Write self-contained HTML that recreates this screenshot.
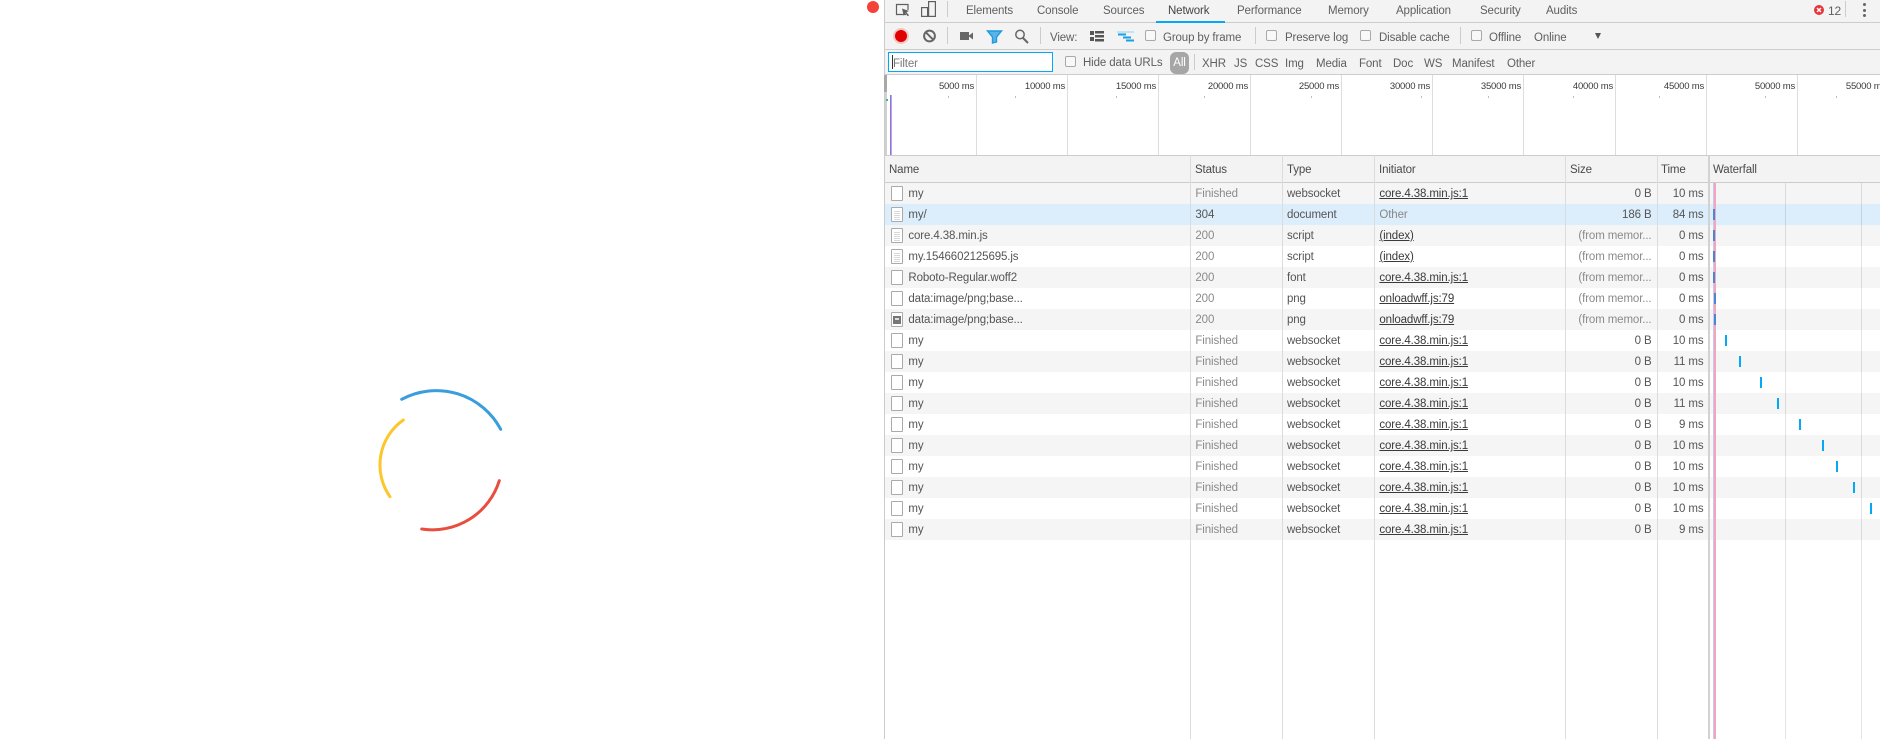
<!DOCTYPE html>
<html><head><meta charset="utf-8"><style>
html,body{margin:0;padding:0;background:#fff;width:1880px;height:739px;overflow:hidden}
body{position:relative;font-family:"Liberation Sans",sans-serif;font-size:11.5px;letter-spacing:-.12px;color:#444}
.a{position:absolute;white-space:nowrap}
.bar{position:absolute;left:885px;width:995px;background:#f3f3f3}
.l{position:absolute;background:#ccc}
.t{position:absolute;white-space:nowrap;color:#5f5f5f;line-height:16px}
.sep{position:absolute;width:1px;background:#ccc}
.cb{position:absolute;width:9px;height:9px;border:1px solid #a9a9a9;border-radius:2px;background:#f8f8f8}
.o{position:absolute;top:81px;white-space:nowrap;text-align:right;font-size:9.5px;letter-spacing:-.2px;color:#3a3a3a;line-height:12px;width:60px}
.g{position:absolute;top:75px;height:80px;width:1px;background:#ddd}
.d{position:absolute;top:96px;width:1px;height:2px;background:#bbb}
.r{position:absolute;left:885px;width:995px;height:21px;line-height:23px;background:#fff;color:#555}
.r.s{background:#f5f5f5}.r.x{background:#dcedfc}
.r span{position:absolute;white-space:nowrap}
.n{left:23.4px}.st{left:310.4px;color:#8a8a8a}.ty{left:402px}
.i{left:494.4px;text-decoration:underline;color:#3a3a3a}
.sz{right:228.5px}.tm{right:176.5px}
.f{color:#8a8a8a}.x .st{color:#555}
.ic{position:absolute;left:6px;top:3px;width:10px;height:13px;border:1px solid #aaa;background:#fff;border-radius:1px}
.ic.dc{background:repeating-linear-gradient(#fff 0 1px,#d8d8d8 1px 2px) 2px 2px/6px 10px no-repeat #fff}
.c{position:absolute;top:155px;bottom:0;width:1px;background:#dcdcdc}
.h{position:absolute;top:162px;color:#4a4a4a;line-height:16px}
.w{position:absolute;width:2px;height:11px;background:#03a9f4}
.w.b{background:#4c86d0}
</style></head><body>
<div class="a" style="left:867px;top:1px;width:12px;height:12px;border-radius:50%;background:#f44336"></div>

<svg class="a" style="left:360px;top:370px" width="160" height="170" fill="none" stroke-width="3" stroke-linecap="round">
<path d="M41.700 29.300A73 73 0 0 1 140.700 59.300" stroke="#3a9ddc"/>
<path d="M139.300 110.700A70 70 0 0 1 61.700 159" stroke="#e84d3d"/>
<path d="M43.300 50A55 55 0 0 0 30 126.700" stroke="#fcc72c"/>
</svg>

<div class="a" style="left:884px;top:0;width:1px;height:739px;background:#ccc"></div>

<div class="bar" style="top:0;height:22px;border-bottom:1px solid #ccc"></div>
<div class="bar" style="top:23px;height:26px;border-bottom:1px solid #ccc"></div>
<div class="bar" style="top:50px;height:24px;border-bottom:1px solid #ccc"></div>

<svg class="a" style="left:885px;top:0" width="70" height="22" fill="none" stroke="#5f5f5f" stroke-width="1.2">
<path d="M21 14.500H11.500V4.500H23V10"/><path d="M17 8.500l7 2.500-2.600 1.200 2.600 3-1.200 1-2.500-3-1.600 2.400z" fill="#5f5f5f" stroke="none"/>
<rect x="43.600" y="1.600" width="6.800" height="14.800"/><rect x="36.600" y="7.600" width="6" height="8.800"/>
</svg>
<div class="sep" style="left:947px;top:1px;height:16px"></div>
<span class="t" style="left:966px;top:3px">Elements</span>
<span class="t" style="left:1037px;top:3px">Console</span>
<span class="t" style="left:1103px;top:3px">Sources</span>
<span class="t" style="left:1168px;top:3px;color:#444">Network</span>
<div class="a" style="left:1156px;top:21px;width:69px;height:2px;background:#03a9f4"></div>
<span class="t" style="left:1237px;top:3px">Performance</span>
<span class="t" style="left:1328px;top:3px">Memory</span>
<span class="t" style="left:1396px;top:3px">Application</span>
<span class="t" style="left:1480px;top:3px">Security</span>
<span class="t" style="left:1546px;top:3px">Audits</span>
<svg class="a" style="left:1813px;top:4px" width="12" height="12"><circle cx="6" cy="6" r="5" fill="#e5343a"/><path d="M4 4l4 4M8 4l-4 4" stroke="#fff" stroke-width="1.400"/></svg>
<span class="t" style="left:1828px;top:3px;font-size:12px">12</span>
<div class="sep" style="left:1845px;top:1px;height:16px"></div>
<div class="a" style="left:1862.500px;top:3px;width:3px;height:3px;border-radius:50%;background:#666"></div>
<div class="a" style="left:1862.500px;top:8.500px;width:3px;height:3px;border-radius:50%;background:#666"></div>
<div class="a" style="left:1862.500px;top:13.500px;width:3px;height:3px;border-radius:50%;background:#666"></div>

<svg class="a" style="left:885px;top:24px" width="260" height="26" fill="none">
<circle cx="16" cy="12" r="8" fill="#f5c6c6"/><circle cx="16" cy="12" r="6" fill="#e00000"/>
<circle cx="44.500" cy="12" r="5.400" stroke="#666" stroke-width="2"/><path d="M40.700 8.200l7.600 7.600" stroke="#666" stroke-width="2"/>
<path d="M75 8h9v8h-9zM84 11.500l4-3v7l-4-3z" fill="#666"/>
<path d="M102.500 7h14l-5 6v5l-4 1v-6z" fill="#5bb4e8" stroke="#1e9ae0" stroke-width="1.400"/>
<circle cx="135" cy="10.500" r="4.200" stroke="#666" stroke-width="1.500"/><path d="M138 14l5 5" stroke="#666" stroke-width="2"/>
<path d="M205 7h4v4h-4zM205 13h4v4h-4zM210 7h9v2.500h-9zM210 11h9v2.500h-9zM210 15h9v2.500h-9z" fill="#555"/>
<path d="M232 7h17v2h-17z" fill="#bfe3f8"/><path d="M233 9.500h8v2h-8zM238 12.500h8v2h-8zM241 15.500h8v2h-8z" fill="#17a0e6"/>
</svg>
<div class="sep" style="left:947px;top:27px;height:17px"></div>
<div class="sep" style="left:1040px;top:27px;height:17px"></div>
<span class="t" style="left:1050px;top:30px">View:</span>
<div class="cb" style="left:1145px;top:30px"></div>
<span class="t" style="left:1163px;top:30px">Group by frame</span>
<div class="sep" style="left:1255px;top:27px;height:17px"></div>
<div class="cb" style="left:1266px;top:30px"></div>
<span class="t" style="left:1285px;top:30px">Preserve log</span>
<div class="cb" style="left:1360px;top:30px"></div>
<span class="t" style="left:1379px;top:30px">Disable cache</span>
<div class="sep" style="left:1460px;top:27px;height:17px"></div>
<div class="cb" style="left:1471px;top:30px"></div>
<span class="t" style="left:1489px;top:30px">Offline</span>
<span class="t" style="left:1534px;top:30px">Online</span>
<div class="a" style="left:1595px;top:33px;width:0;height:0;border-left:3.500px solid transparent;border-right:3.500px solid transparent;border-top:6px solid #555"></div>

<div class="a" style="left:888px;top:52px;width:163px;height:18px;border:1px solid #03a9f4;background:#fff"></div>
<div class="a" style="left:892px;top:55px;width:1px;height:14px;background:#333"></div>
<span class="t" style="left:893px;top:56px;color:#777">Filter</span>
<div class="cb" style="left:1065px;top:56px"></div>
<span class="t" style="left:1083px;top:55px">Hide data URLs</span>
<div class="a" style="left:1170px;top:52px;width:19px;height:22px;background:#a6a6a6;border-radius:6px;color:#fff;text-align:center;line-height:22px">All</div>
<div class="sep" style="left:1194px;top:54px;height:16px"></div>
<span class="t" style="left:1202px;top:56px">XHR</span>
<span class="t" style="left:1234px;top:56px">JS</span>
<span class="t" style="left:1255px;top:56px">CSS</span>
<span class="t" style="left:1285px;top:56px">Img</span>
<span class="t" style="left:1316px;top:56px">Media</span>
<span class="t" style="left:1359px;top:56px">Font</span>
<span class="t" style="left:1393px;top:56px">Doc</span>
<span class="t" style="left:1424px;top:56px">WS</span>
<span class="t" style="left:1452px;top:56px">Manifest</span>
<span class="t" style="left:1507px;top:56px">Other</span>

<div class="g" style="left:976px"></div><div class="g" style="left:1067px"></div><div class="g" style="left:1158px"></div><div class="g" style="left:1250px"></div><div class="g" style="left:1341px"></div><div class="g" style="left:1432px"></div><div class="g" style="left:1523px"></div><div class="g" style="left:1615px"></div><div class="g" style="left:1706px"></div><div class="g" style="left:1797px"></div>
<span class="o" style="left:914px">5000 ms</span><span class="o" style="left:1005px">10000 ms</span><span class="o" style="left:1096px">15000 ms</span><span class="o" style="left:1188px">20000 ms</span><span class="o" style="left:1279px">25000 ms</span><span class="o" style="left:1370px">30000 ms</span><span class="o" style="left:1461px">35000 ms</span><span class="o" style="left:1553px">40000 ms</span><span class="o" style="left:1644px">45000 ms</span><span class="o" style="left:1735px">50000 ms</span><span class="o" style="left:1826px">55000 ms</span>
<div class="d" style="left:948px"></div><div class="d" style="left:1015px"></div><div class="d" style="left:1116px"></div><div class="d" style="left:1204px"></div><div class="d" style="left:1311px"></div><div class="d" style="left:1421px"></div><div class="d" style="left:1488px"></div><div class="d" style="left:1573px"></div><div class="d" style="left:1659px"></div><div class="d" style="left:1765px"></div><div class="d" style="left:1836px"></div>
<div class="a" style="left:884px;top:75px;width:3px;height:17px;background:#a8a8a8"></div>
<div class="a" style="left:885px;top:92px;width:2px;height:63px;background:#d0d0d0"></div>
<div class="a" style="left:886px;top:99px;width:2px;height:2px;background:#1fbfae"></div>
<div class="a" style="left:890px;top:95px;width:1px;height:60px;background:#6f7ff5"></div>
<div class="a" style="left:891px;top:95px;width:1px;height:60px;background:#d79ac8"></div>

<div class="bar" style="top:155px;border-top:1px solid #ccc;border-bottom:1px solid #ccc;box-sizing:content-box;height:26px"></div>

<div class="r s" style="top:183px"><i class="ic"></i><span class="n">my</span><span class="st">Finished</span><span class="ty">websocket</span><span class="i">core.4.38.min.js:1</span><span class="sz">0 B</span><span class="tm">10 ms</span></div>
<div class="r x" style="top:204px"><i class="ic dc"></i><span class="n">my/</span><span class="st">304</span><span class="ty">document</span><span class="i" style="text-decoration:none;color:#888">Other</span><span class="sz">186 B</span><span class="tm">84 ms</span></div>
<div class="r s" style="top:225px"><i class="ic dc"></i><span class="n">core.4.38.min.js</span><span class="st">200</span><span class="ty">script</span><span class="i">(index)</span><span class="sz f">(from memor...</span><span class="tm">0 ms</span></div>
<div class="r" style="top:246px"><i class="ic dc"></i><span class="n">my.1546602125695.js</span><span class="st">200</span><span class="ty">script</span><span class="i">(index)</span><span class="sz f">(from memor...</span><span class="tm">0 ms</span></div>
<div class="r s" style="top:267px"><i class="ic"></i><span class="n">Roboto-Regular.woff2</span><span class="st">200</span><span class="ty">font</span><span class="i">core.4.38.min.js:1</span><span class="sz f">(from memor...</span><span class="tm">0 ms</span></div>
<div class="r" style="top:288px"><i class="ic"></i><span class="n">data:image/png;base...</span><span class="st">200</span><span class="ty">png</span><span class="i">onloadwff.js:79</span><span class="sz f">(from memor...</span><span class="tm">0 ms</span></div>
<div class="r s" style="top:309px"><i class="ic"><b class="a" style="left:1px;top:3px;width:8px;height:8px;background:#777"></b><b class="a" style="left:3px;top:5px;width:4px;height:2px;background:#ddd"></b></i><span class="n">data:image/png;base...</span><span class="st">200</span><span class="ty">png</span><span class="i">onloadwff.js:79</span><span class="sz f">(from memor...</span><span class="tm">0 ms</span></div>
<div class="r" style="top:330px"><i class="ic"></i><span class="n">my</span><span class="st">Finished</span><span class="ty">websocket</span><span class="i">core.4.38.min.js:1</span><span class="sz">0 B</span><span class="tm">10 ms</span></div>
<div class="r s" style="top:351px"><i class="ic"></i><span class="n">my</span><span class="st">Finished</span><span class="ty">websocket</span><span class="i">core.4.38.min.js:1</span><span class="sz">0 B</span><span class="tm">11 ms</span></div>
<div class="r" style="top:372px"><i class="ic"></i><span class="n">my</span><span class="st">Finished</span><span class="ty">websocket</span><span class="i">core.4.38.min.js:1</span><span class="sz">0 B</span><span class="tm">10 ms</span></div>
<div class="r s" style="top:393px"><i class="ic"></i><span class="n">my</span><span class="st">Finished</span><span class="ty">websocket</span><span class="i">core.4.38.min.js:1</span><span class="sz">0 B</span><span class="tm">11 ms</span></div>
<div class="r" style="top:414px"><i class="ic"></i><span class="n">my</span><span class="st">Finished</span><span class="ty">websocket</span><span class="i">core.4.38.min.js:1</span><span class="sz">0 B</span><span class="tm">9 ms</span></div>
<div class="r s" style="top:435px"><i class="ic"></i><span class="n">my</span><span class="st">Finished</span><span class="ty">websocket</span><span class="i">core.4.38.min.js:1</span><span class="sz">0 B</span><span class="tm">10 ms</span></div>
<div class="r" style="top:456px"><i class="ic"></i><span class="n">my</span><span class="st">Finished</span><span class="ty">websocket</span><span class="i">core.4.38.min.js:1</span><span class="sz">0 B</span><span class="tm">10 ms</span></div>
<div class="r s" style="top:477px"><i class="ic"></i><span class="n">my</span><span class="st">Finished</span><span class="ty">websocket</span><span class="i">core.4.38.min.js:1</span><span class="sz">0 B</span><span class="tm">10 ms</span></div>
<div class="r" style="top:498px"><i class="ic"></i><span class="n">my</span><span class="st">Finished</span><span class="ty">websocket</span><span class="i">core.4.38.min.js:1</span><span class="sz">0 B</span><span class="tm">10 ms</span></div>
<div class="r s" style="top:519px"><i class="ic"></i><span class="n">my</span><span class="st">Finished</span><span class="ty">websocket</span><span class="i">core.4.38.min.js:1</span><span class="sz">0 B</span><span class="tm">9 ms</span></div>

<div class="c" style="left:1190px"></div><div class="c" style="left:1282px"></div><div class="c" style="left:1374px"></div><div class="c" style="left:1565px"></div><div class="c" style="left:1657px"></div>
<div class="c" style="left:1708px;width:2px;background:#d2d2d2"></div>
<div class="a" style="left:1785px;top:183px;bottom:0;width:1px;background:rgba(0,0,0,.11)"></div>
<div class="a" style="left:1861px;top:183px;bottom:0;width:1px;background:rgba(0,0,0,.11)"></div>
<span class="h" style="left:889px">Name</span><span class="h" style="left:1195px">Status</span><span class="h" style="left:1287px">Type</span><span class="h" style="left:1379px">Initiator</span><span class="h" style="left:1570px">Size</span><span class="h" style="left:1661px">Time</span><span class="h" style="left:1713px">Waterfall</span>

<div class="a" style="left:1713px;top:183px;bottom:0;width:1px;background:#c9c6f2"></div>
<div class="a" style="left:1714px;top:183px;bottom:0;width:2px;background:#f2a6bb"></div>

<div class="w b" style="left:1713px;top:209px"></div><div class="w b" style="left:1713px;top:230px"></div><div class="w b" style="left:1713px;top:251px"></div><div class="w b" style="left:1713px;top:272px"></div><div class="w b" style="left:1714px;top:293px"></div><div class="w b" style="left:1714px;top:314px"></div>
<div class="w" style="left:1725px;top:335px"></div><div class="w" style="left:1739px;top:356px"></div><div class="w" style="left:1760px;top:377px"></div><div class="w" style="left:1777px;top:398px"></div><div class="w" style="left:1799px;top:419px"></div><div class="w" style="left:1822px;top:440px"></div><div class="w" style="left:1836px;top:461px"></div><div class="w" style="left:1853px;top:482px"></div><div class="w" style="left:1870px;top:503px"></div>
</body></html>
